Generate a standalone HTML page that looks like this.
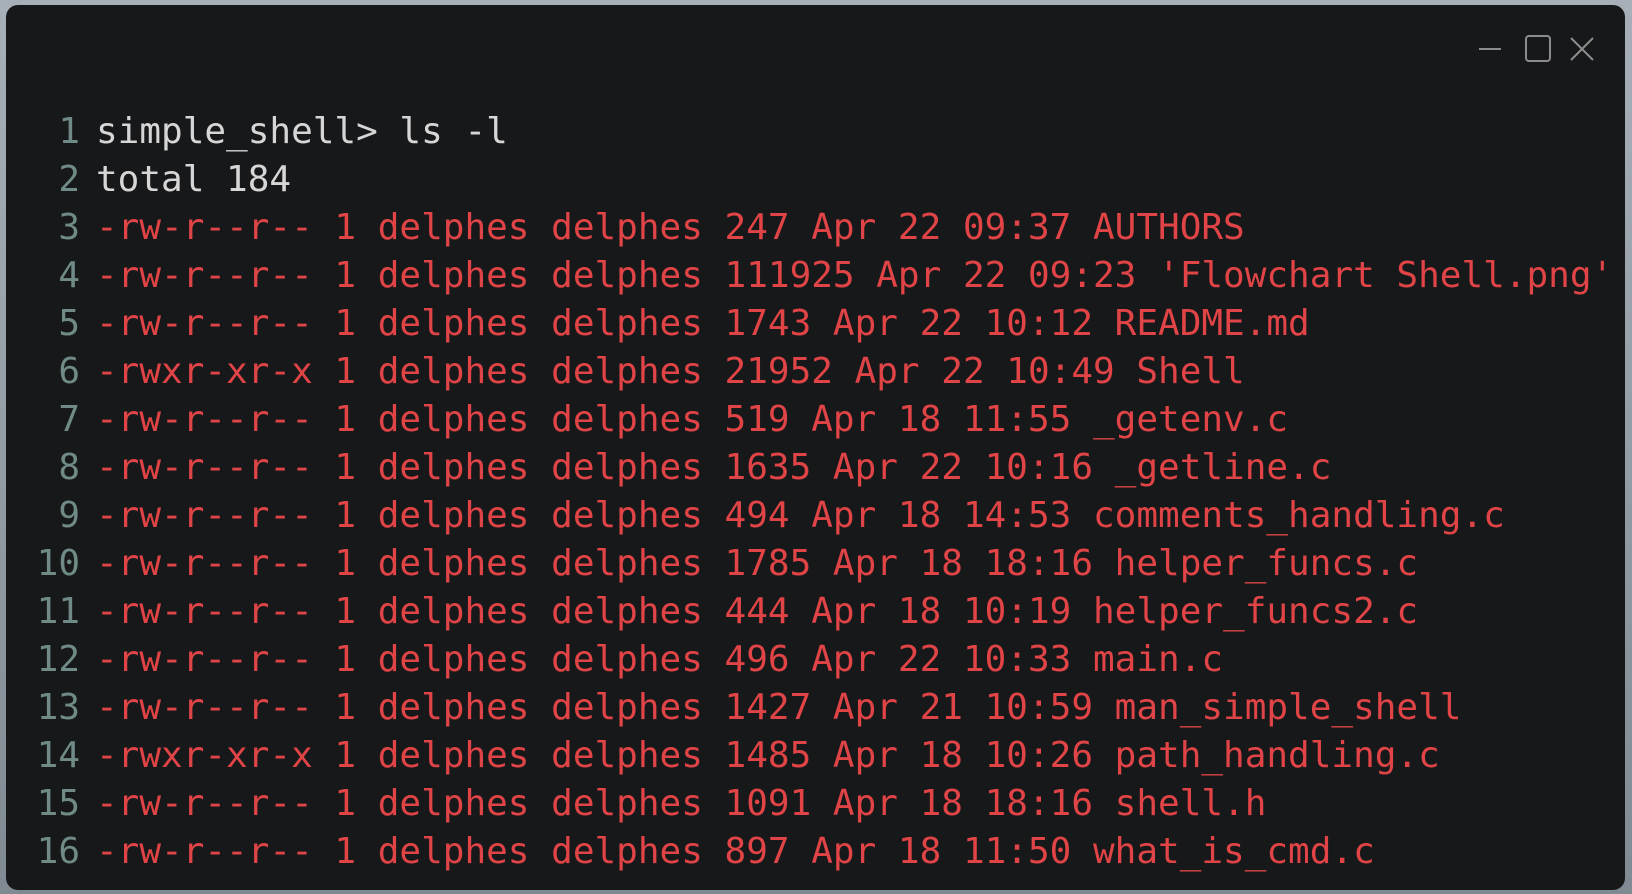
<!DOCTYPE html>
<html><head><meta charset="utf-8"><style>
html,body{margin:0;padding:0;width:1632px;height:894px;overflow:hidden;background:linear-gradient(180deg,#a7b0b8,#7f8a93);}
.win{position:absolute;left:6px;top:5px;width:1619px;height:885px;background:#17181a;border-radius:12px;overflow:hidden;}
.lines{position:absolute;left:0;top:103px;font-family:"DejaVu Sans Mono","Liberation Mono",monospace;font-size:36px;line-height:48px;}
.l{display:flex;height:48px;white-space:pre}
.n{width:74px;text-align:right;color:#6f8a87;padding-right:16px;flex:none}
.w{color:#d6d6d6}
.r{color:#e04446}
</style></head><body>
<div class="win">
<svg style="position:absolute;left:0;top:0" width="1619" height="80">
<g stroke="#8c8c8c" stroke-width="2" fill="none">
<line x1="1473" y1="44" x2="1495" y2="44"/>
<rect x="1520" y="31" width="24" height="25" rx="3"/>
<line x1="1565" y1="33" x2="1587" y2="55"/><line x1="1587" y1="33" x2="1565" y2="55"/>
</g></svg>
<div class="lines"><div class="l"><span class="n">1</span><span class="w">simple_shell&gt; ls -l</span></div><div class="l"><span class="n">2</span><span class="w">total 184</span></div><div class="l"><span class="n">3</span><span class="r">-rw-r--r-- 1 delphes delphes 247 Apr 22 09:37 AUTHORS</span></div><div class="l"><span class="n">4</span><span class="r">-rw-r--r-- 1 delphes delphes 111925 Apr 22 09:23 'Flowchart Shell.png'</span></div><div class="l"><span class="n">5</span><span class="r">-rw-r--r-- 1 delphes delphes 1743 Apr 22 10:12 README.md</span></div><div class="l"><span class="n">6</span><span class="r">-rwxr-xr-x 1 delphes delphes 21952 Apr 22 10:49 Shell</span></div><div class="l"><span class="n">7</span><span class="r">-rw-r--r-- 1 delphes delphes 519 Apr 18 11:55 _getenv.c</span></div><div class="l"><span class="n">8</span><span class="r">-rw-r--r-- 1 delphes delphes 1635 Apr 22 10:16 _getline.c</span></div><div class="l"><span class="n">9</span><span class="r">-rw-r--r-- 1 delphes delphes 494 Apr 18 14:53 comments_handling.c</span></div><div class="l"><span class="n">10</span><span class="r">-rw-r--r-- 1 delphes delphes 1785 Apr 18 18:16 helper_funcs.c</span></div><div class="l"><span class="n">11</span><span class="r">-rw-r--r-- 1 delphes delphes 444 Apr 18 10:19 helper_funcs2.c</span></div><div class="l"><span class="n">12</span><span class="r">-rw-r--r-- 1 delphes delphes 496 Apr 22 10:33 main.c</span></div><div class="l"><span class="n">13</span><span class="r">-rw-r--r-- 1 delphes delphes 1427 Apr 21 10:59 man_simple_shell</span></div><div class="l"><span class="n">14</span><span class="r">-rwxr-xr-x 1 delphes delphes 1485 Apr 18 10:26 path_handling.c</span></div><div class="l"><span class="n">15</span><span class="r">-rw-r--r-- 1 delphes delphes 1091 Apr 18 18:16 shell.h</span></div><div class="l"><span class="n">16</span><span class="r">-rw-r--r-- 1 delphes delphes 897 Apr 18 11:50 what_is_cmd.c</span></div></div>
</div>
</body></html>
